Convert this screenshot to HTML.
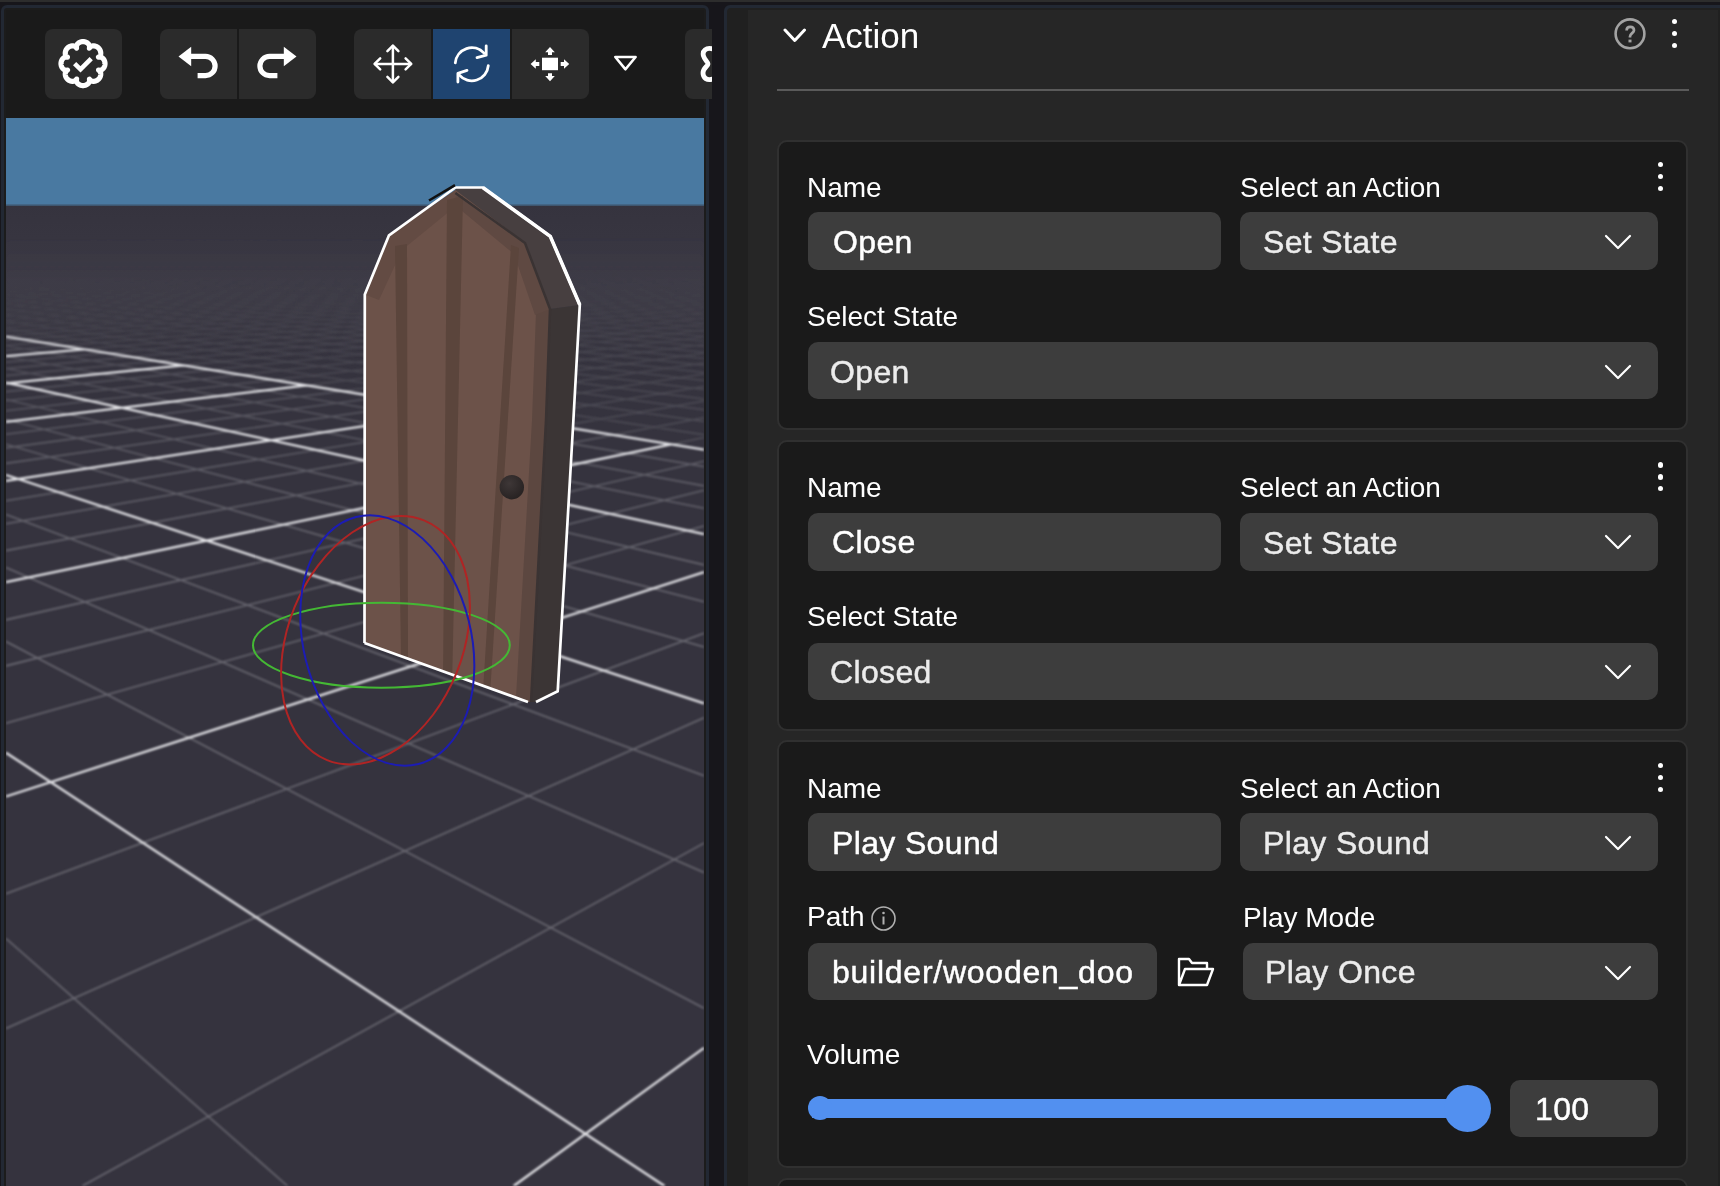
<!DOCTYPE html>
<html><head><meta charset="utf-8"><style>
html,body{margin:0;padding:0;width:1720px;height:1186px;overflow:hidden;background:#17161b;font-family:"Liberation Sans",sans-serif;}
.r{position:absolute;}
.t{position:absolute;line-height:1;white-space:nowrap;will-change:transform;}
.v{-webkit-text-stroke:0.45px currentColor;}
#left{position:absolute;left:0;top:0;width:712px;height:1186px;overflow:hidden;}
</style></head><body>
<div class="r" style="left:0;top:0;width:1720px;height:2px;background:#2d2d2d"></div>
<div id="left">
<div class="r" style="left:1px;top:5px;width:708px;height:1295px;background:#222833;border-radius:6px;"></div>
<div class="r" style="left:4px;top:8px;width:702px;height:1292px;background:#1c1c1c;border-radius:3px;"></div>
<div class="r" style="left:6px;top:10px;width:698px;height:108px;background:#1a1a1a;border-radius:0px;"></div>
<svg class="r" style="left:0;top:0" width="712" height="1186" viewBox="0 0 712 1186">
<defs><clipPath id="vc"><rect x="6" y="118" width="698" height="1068"/></clipPath><linearGradient id="fade" x1="0" y1="0" x2="0" y2="1"><stop offset="0" stop-color="#35333e" stop-opacity="1"/><stop offset="0.25" stop-color="#35333e" stop-opacity="0.85"/><stop offset="1" stop-color="#35333e" stop-opacity="0"/></linearGradient><linearGradient id="mg" gradientUnits="userSpaceOnUse" x1="0" y1="0" x2="0" y2="1186"><stop offset="0.2361" stop-color="#000000"/><stop offset="0.2698" stop-color="#3c3c3c"/><stop offset="0.3035" stop-color="#6e6e6e"/><stop offset="0.3541" stop-color="#aaaaaa"/><stop offset="0.4384" stop-color="#e1e1e1"/><stop offset="0.5481" stop-color="#ffffff"/></linearGradient><linearGradient id="mg2" gradientUnits="userSpaceOnUse" x1="0" y1="0" x2="0" y2="1186"><stop offset="0.2530" stop-color="#000000"/><stop offset="0.2698" stop-color="#969696"/><stop offset="0.2867" stop-color="#e6e6e6"/><stop offset="0.3120" stop-color="#ffffff"/></linearGradient><linearGradient id="haze" gradientUnits="userSpaceOnUse" x1="0" y1="205" x2="0" y2="360"><stop offset="0" stop-color="#3e3c47" stop-opacity="0"/><stop offset="0.5" stop-color="#3b3944" stop-opacity="0.6"/><stop offset="1" stop-color="#3e3c47" stop-opacity="0"/></linearGradient><linearGradient id="mg3" gradientUnits="userSpaceOnUse" x1="0" y1="0" x2="0" y2="1186"><stop offset="0.1939" stop-color="#000000"/><stop offset="0.2277" stop-color="#1c1c1c"/><stop offset="0.2614" stop-color="#505050"/><stop offset="0.3120" stop-color="#969696"/><stop offset="0.3879" stop-color="#d2d2d2"/><stop offset="0.5059" stop-color="#ffffff"/></linearGradient><mask id="gm3" maskUnits="userSpaceOnUse" x="0" y="0" width="712" height="1186"><rect x="0" y="0" width="712" height="1186" fill="url(#mg3)"/></mask><mask id="gm" maskUnits="userSpaceOnUse" x="0" y="0" width="712" height="1186"><rect x="0" y="0" width="712" height="1186" fill="url(#mg)"/></mask><mask id="gm2" maskUnits="userSpaceOnUse" x="0" y="0" width="712" height="1186"><rect x="0" y="0" width="712" height="1186" fill="url(#mg2)"/></mask><filter id="gb" x="0" y="0" width="712" height="1186" filterUnits="userSpaceOnUse"><feGaussianBlur stdDeviation="0.85"/></filter><radialGradient id="knob" cx="0.4" cy="0.35" r="0.7"><stop offset="0" stop-color="#3e3737"/><stop offset="1" stop-color="#262121"/></radialGradient></defs>
<g clip-path="url(#vc)">
<rect x="6" y="118" width="698" height="88" fill="#4979a1"/>
<rect x="6" y="205.5" width="698" height="981" fill="#35333e"/>
<rect x="6" y="204.3" width="698" height="1.4" fill="#3f5770" opacity="0.8"/>
<rect x="6" y="205" width="698" height="160" fill="url(#haze)"/>
<g filter="url(#gb)">
<path mask="url(#gm3)" d="M696.4 238.5L704.0 238.7M680.5 238.6L704.0 239.2M664.5 238.6L704.0 239.6M23.1 240.3L6.0 240.7M648.6 238.7L704.0 240.1M41.5 240.3L6.0 241.2M632.6 238.7L704.0 240.6M59.8 240.2L6.0 241.6M616.7 238.8L704.0 241.1M78.2 240.2L6.0 242.0M600.8 238.8L704.0 241.5M96.6 240.1L6.0 242.5M584.8 238.8L704.0 242.1M115.0 240.1L6.0 242.9M568.9 238.9L704.0 242.6M133.3 240.0L6.0 243.4M553.0 238.9L704.0 243.1M151.7 240.0L6.0 243.9M537.0 239.0L704.0 243.6M170.1 239.9L6.0 244.4M521.1 239.0L704.0 244.2M188.5 239.9L6.0 244.9M505.2 239.0L704.0 244.8M206.8 239.8L6.0 245.4M489.2 239.1L704.0 245.3M225.2 239.8L6.0 245.9M473.3 239.1L704.0 245.9M243.6 239.7L6.0 246.4M457.3 239.2L704.0 246.5M262.0 239.7L6.0 247.0M441.4 239.2L704.0 247.2M280.3 239.6L6.0 247.5M425.5 239.3L704.0 247.8M298.7 239.6L6.0 248.1M409.5 239.3L704.0 248.5M317.1 239.5L6.0 248.7M393.6 239.3L704.0 249.1M335.5 239.5L6.0 249.3M377.7 239.4L704.0 249.8M353.8 239.4L6.0 249.9M361.7 239.4L704.0 250.5M372.2 239.4L6.0 250.5M345.8 239.5L704.0 251.3M390.6 239.3L6.0 251.2M329.9 239.5L704.0 252.0M409.0 239.3L6.0 251.8M313.9 239.5L704.0 252.8M427.3 239.2L6.0 252.5M298.0 239.6L704.0 253.6M445.7 239.2L6.0 253.2M282.1 239.6L704.0 254.4M464.1 239.2L6.0 253.9M266.1 239.7L704.0 255.2M482.5 239.1L6.0 254.6M250.2 239.7L704.0 256.1M500.9 239.1L6.0 255.4M234.2 239.8L704.0 257.0M519.2 239.0L6.0 256.1M218.3 239.8L704.0 257.9M537.6 239.0L6.0 256.9M202.4 239.8L704.0 258.8M556.0 238.9L6.0 257.7M186.4 239.9L704.0 259.8M574.4 238.9L6.0 258.6M170.5 239.9L704.0 260.8M592.7 238.8L6.0 259.4M154.6 240.0L704.0 261.9M611.1 238.8L6.0 260.3M138.6 240.0L704.0 262.9M629.5 238.7L6.0 261.2M122.7 240.0L704.0 264.0M647.9 238.7L6.0 262.2M106.8 240.1L704.0 265.2M666.2 238.6L6.0 263.1M90.8 240.1L704.0 266.4M684.6 238.6L6.0 264.1M74.9 240.2L704.0 267.6M703.0 238.5L6.0 265.1M58.9 240.2L704.0 268.9M704.0 239.2L6.0 266.2M43.0 240.2L704.0 270.2M704.0 239.8L6.0 267.3M27.1 240.3L704.0 271.5M704.0 240.5L6.0 268.4M11.1 240.3L704.0 272.9M704.0 241.3L6.0 269.6M6.0 240.9L704.0 274.4M704.0 242.0L6.0 270.8M6.0 241.7L704.0 275.9M704.0 242.8L6.0 272.0M6.0 242.6L704.0 277.5M704.0 243.6L6.0 273.3M6.0 243.5L704.0 279.2M704.0 244.5L6.0 274.6M6.0 244.4L704.0 280.9M704.0 245.3L6.0 276.0M6.0 245.4L704.0 282.7M704.0 246.2L6.0 277.5M6.0 246.4L704.0 284.6M704.0 247.2L6.0 278.9M6.0 247.5L704.0 286.5M704.0 248.1L6.0 280.5M6.0 248.6L704.0 288.6M704.0 249.1L6.0 282.1M6.0 249.8L704.0 290.7M704.0 250.2L6.0 283.8M6.0 251.0L704.0 292.9M704.0 251.3L6.0 285.5M6.0 252.3L704.0 295.3M704.0 252.4L6.0 287.3M6.0 253.6L704.0 297.8M704.0 253.6L6.0 289.2M6.0 255.1L704.0 300.4M704.0 254.8L6.0 291.2M6.0 256.6L704.0 303.1M704.0 256.1L6.0 293.2M6.0 258.1L704.0 306.0M704.0 257.5L6.0 295.4M6.0 259.8L704.0 309.0M704.0 258.9L6.0 297.6M6.0 261.5L704.0 312.2M704.0 260.4L6.0 300.0M6.0 263.4L704.0 315.6M704.0 261.9L6.0 302.4M6.0 265.4L704.0 319.2M704.0 263.5L6.0 305.0M6.0 267.5L704.0 323.1M704.0 265.2L6.0 307.7M6.0 269.7L704.0 327.2M704.0 267.0L6.0 310.6M6.0 272.1L704.0 331.5M704.0 268.9L6.0 313.6M6.0 274.6L704.0 336.2M704.0 270.9L6.0 316.8M6.0 277.3L704.0 341.2M704.0 273.1L6.0 320.2M6.0 280.3L704.0 346.5M704.0 275.3L6.0 323.8M6.0 283.4L704.0 352.3M704.0 277.7L6.0 327.5M6.0 286.8L704.0 358.5M704.0 280.2L6.0 331.5M6.0 290.5L704.0 365.3M704.0 282.9L6.0 335.8M6.0 294.5L704.0 372.6M704.0 285.7L21.8 339.1M6.0 298.9L704.0 380.6M704.0 288.8L41.7 342.4M6.0 303.7L704.0 389.4M704.0 292.1L62.5 345.7M6.0 308.9L704.0 399.0M704.0 295.6L84.3 349.3M6.0 314.7L704.0 409.7M704.0 299.4L107.2 353.0M6.0 321.2L704.0 421.5M704.0 303.5L131.4 356.9M6.0 328.4L704.0 434.8M704.0 307.9L156.7 361.0M704.0 312.7L183.5 365.3M704.0 317.9L211.7 369.9M704.0 323.7L241.5 374.7M704.0 330.0L273.1 379.9M704.0 336.9L306.6 385.3M704.0 344.6L342.2 391.1M704.0 353.3L380.1 397.2M704.0 363.0L420.5 403.8M704.0 374.0L463.7 410.8M704.0 386.5L510.0 418.3M704.0 400.9L559.7 426.3M704.0 417.7L613.3 435.0M704.0 437.5L671.1 444.4" stroke="#57565f" stroke-width="1.5" fill="none"/>
<path mask="url(#gm)" d="M21.8 339.1L6.0 340.4M41.7 342.4L6.0 345.2M62.5 345.7L6.0 350.5M107.2 353.0L6.0 362.1M131.4 356.9L6.0 368.6M156.7 361.0L6.0 375.6M6.0 345.8L704.0 466.6M211.7 369.9L6.0 391.6M6.0 356.3L704.0 485.9M241.5 374.7L6.0 400.8M6.0 368.5L704.0 508.2M273.1 379.9L6.0 410.8M6.0 399.5L704.0 564.9M342.2 391.1L6.0 434.2M6.0 419.6L704.0 601.8M380.1 397.2L6.0 447.9M6.0 444.2L704.0 646.9M420.5 403.8L6.0 463.4M6.0 514.6L704.0 775.8M510.0 418.3L6.0 500.8M6.0 567.5L704.0 872.6M559.7 426.3L6.0 523.8M6.0 641.5L704.0 1008.2M613.3 435.0L6.0 550.6M6.0 938.5L287.5 1186.0M704.0 461.3L6.0 619.9M704.0 490.2L6.0 665.9M704.0 526.1L6.0 723.2M704.0 633.2L6.0 893.7M704.0 717.8L6.0 1028.5M704.0 843.1L82.3 1186.0" stroke="#6a6972" stroke-width="1.6" fill="none"/>
<path mask="url(#gm2)" d="M84.3 349.3L6.0 356.1M6.0 336.6L704.0 449.7M183.5 365.3L6.0 383.3M6.0 382.7L704.0 534.2M306.6 385.3L6.0 421.9M6.0 475.0L704.0 703.3M463.7 410.8L6.0 480.9M6.0 752.7L664.6 1186.0M671.1 444.4L6.0 582.1M704.0 572.2L6.0 796.5M704.0 1047.9L513.6 1186.0" stroke="#e2e2e6" stroke-width="2.3" fill="none"/>
</g>
<polygon points="455.4,188 482.8,187.5 550.3,236.4 579.8,304.9 550.3,309 525,242.7 455.4,193" fill="#473f40"/>
<polygon points="579.8,304.9 573.4,420 557.7,691.3 536,702 531,702 546,420 550.3,309" fill="#3b3535"/>
<clipPath id="ff"><polygon points="455.4,190 389,235.3 364.8,294.4 364.5,643 528,702 531,702 546,420 550.3,309 525,242.7"/></clipPath>
<polygon points="455.4,190 389,235.3 364.8,294.4 364.5,643 528,702 531,702 546,420 550.3,309 525,242.7" fill="#6c5249"/>
<g clip-path="url(#ff)">
<polygon points="525,242.7 550.3,309 546,420 531,702 516,697 532,420 536,312 518,252" fill="#5c4740"/>
<polygon points="389,235.3 455.4,190 456,206 402,250 379,300 364.8,294.4" fill="#634b43"/>
<polygon points="455.4,192 525,242.7 550.3,309 535,315 514,254 456,206" fill="#5f4942"/>
<polygon points="395,246 407,244 408,660 401,658" fill="#5b453c"/>
<polygon points="447,200 463,196 452,686 443,682" fill="#5b453c"/>
<polygon points="511,245 519,248 490,694 483,691" fill="#5b453c"/>
</g>
<polyline points="455.4,193 525,243 550,309 546,420 531,702" fill="none" stroke="#3a3333" stroke-width="2.5"/>
<circle cx="511.8" cy="487.2" r="12.2" fill="url(#knob)"/>
<polyline points="364.5,643 364.8,294.4 389,235.3 455.4,187.5 482.8,187.5 550.3,236.4 579.8,304.9 573.4,420 557.7,691.3 536,702" fill="none" stroke="#ffffff" stroke-width="2.7" stroke-linejoin="round"/>
<polyline points="364.5,643 528,702" fill="none" stroke="#ffffff" stroke-width="2.7"/>
<polyline points="482.8,187.5 550.3,236.4 579.8,304.9" fill="none" stroke="#fff" stroke-width="3.6" stroke-linejoin="round"/>
<path d="M429 200.5 L455 185.2" stroke="#111" stroke-width="2.6"/>
<ellipse cx="381.4" cy="645.2" rx="128.4" ry="42.5" fill="none" stroke="#44b834" stroke-width="2"/>
<ellipse cx="375.5" cy="640.2" rx="87.4" ry="129.3" transform="rotate(22 375.5 640.2)" fill="none" stroke="#b02424" stroke-width="2"/>
<ellipse cx="387.3" cy="640.5" rx="83.8" ry="127.4" transform="rotate(-14.2 387.3 640.5)" fill="none" stroke="#1c1cb4" stroke-width="2"/>
</g></svg>
<div class="r" style="left:45px;top:29px;width:77px;height:70px;background:#2b2b2b;border-radius:8px;"></div>
<div class="r" style="left:160px;top:29px;width:156px;height:70px;background:#2b2b2b;border-radius:8px;"></div>
<div class="r" style="left:237px;top:29px;width:2px;height:70px;background:#1a1a1a;border-radius:0px;"></div>
<div class="r" style="left:354px;top:29px;width:235px;height:70px;background:#2b2b2b;border-radius:8px;"></div>
<div class="r" style="left:433px;top:29px;width:77px;height:70px;background:#1f4470;border-radius:0px;"></div>
<div class="r" style="left:431px;top:29px;width:2px;height:70px;background:#1a1a1a;border-radius:0px;"></div>
<div class="r" style="left:510px;top:29px;width:2px;height:70px;background:#1a1a1a;border-radius:0px;"></div>
<div class="r" style="left:685px;top:29px;width:45px;height:70px;background:#2b2b2b;border-radius:8px;"></div>
<svg class="r" style="left:0;top:0" width="712" height="118"><polygon points="105.00,63.60 104.99,63.95 104.97,64.29 104.93,64.63 104.87,64.98 104.80,65.32 104.72,65.65 104.62,65.99 104.50,66.32 104.36,66.64 104.21,66.96 104.05,67.27 103.86,67.58 103.66,67.88 103.45,68.17 103.21,68.45 102.96,68.72 102.69,68.99 102.39,69.23 102.07,69.47 101.73,69.68 101.35,69.88 100.92,70.05 100.44,70.19 99.83,70.26 98.52,70.03 99.61,70.79 99.99,71.27 100.24,71.71 100.42,72.13 100.54,72.54 100.64,72.94 100.70,73.33 100.73,73.71 100.74,74.09 100.72,74.46 100.69,74.83 100.64,75.19 100.57,75.54 100.48,75.88 100.38,76.22 100.26,76.56 100.12,76.88 99.97,77.20 99.81,77.50 99.63,77.80 99.44,78.09 99.24,78.38 99.02,78.65 98.80,78.91 98.56,79.16 98.31,79.40 98.05,79.62 97.78,79.84 97.49,80.04 97.20,80.23 96.90,80.41 96.60,80.57 96.28,80.72 95.96,80.86 95.62,80.98 95.28,81.08 94.94,81.17 94.59,81.24 94.23,81.29 93.86,81.32 93.49,81.34 93.11,81.33 92.73,81.30 92.34,81.24 91.94,81.14 91.53,81.02 91.11,80.84 90.67,80.59 90.19,80.21 89.43,79.12 89.66,80.43 89.59,81.04 89.45,81.52 89.28,81.95 89.08,82.33 88.87,82.67 88.63,82.99 88.39,83.29 88.12,83.56 87.85,83.81 87.57,84.05 87.28,84.26 86.98,84.46 86.67,84.65 86.36,84.81 86.04,84.96 85.72,85.10 85.39,85.22 85.05,85.32 84.72,85.40 84.38,85.47 84.03,85.53 83.69,85.57 83.35,85.59 83.00,85.60 82.65,85.59 82.31,85.57 81.97,85.53 81.62,85.47 81.28,85.40 80.95,85.32 80.61,85.22 80.28,85.10 79.96,84.96 79.64,84.81 79.33,84.65 79.02,84.46 78.72,84.26 78.43,84.05 78.15,83.81 77.88,83.56 77.61,83.29 77.37,82.99 77.13,82.67 76.92,82.33 76.72,81.95 76.55,81.52 76.41,81.04 76.34,80.43 76.57,79.12 75.81,80.21 75.33,80.59 74.89,80.84 74.47,81.02 74.06,81.14 73.66,81.24 73.27,81.30 72.89,81.33 72.51,81.34 72.14,81.32 71.77,81.29 71.41,81.24 71.06,81.17 70.72,81.08 70.38,80.98 70.04,80.86 69.72,80.72 69.40,80.57 69.10,80.41 68.80,80.23 68.51,80.04 68.22,79.84 67.95,79.62 67.69,79.40 67.44,79.16 67.20,78.91 66.98,78.65 66.76,78.38 66.56,78.09 66.37,77.80 66.19,77.50 66.03,77.20 65.88,76.88 65.74,76.56 65.62,76.22 65.52,75.88 65.43,75.54 65.36,75.19 65.31,74.83 65.28,74.46 65.26,74.09 65.27,73.71 65.30,73.33 65.36,72.94 65.46,72.54 65.58,72.13 65.76,71.71 66.01,71.27 66.39,70.79 67.48,70.03 66.17,70.26 65.56,70.19 65.08,70.05 64.65,69.88 64.27,69.68 63.93,69.47 63.61,69.23 63.31,68.99 63.04,68.72 62.79,68.45 62.55,68.17 62.34,67.88 62.14,67.58 61.95,67.27 61.79,66.96 61.64,66.64 61.50,66.32 61.38,65.99 61.28,65.65 61.20,65.32 61.13,64.98 61.07,64.63 61.03,64.29 61.01,63.95 61.00,63.60 61.01,63.25 61.03,62.91 61.07,62.57 61.13,62.22 61.20,61.88 61.28,61.55 61.38,61.21 61.50,60.88 61.64,60.56 61.79,60.24 61.95,59.93 62.14,59.62 62.34,59.32 62.55,59.03 62.79,58.75 63.04,58.48 63.31,58.21 63.61,57.97 63.93,57.73 64.27,57.52 64.65,57.32 65.08,57.15 65.56,57.01 66.17,56.94 67.48,57.17 66.39,56.41 66.01,55.93 65.76,55.49 65.58,55.07 65.46,54.66 65.36,54.26 65.30,53.87 65.27,53.49 65.26,53.11 65.28,52.74 65.31,52.37 65.36,52.01 65.43,51.66 65.52,51.32 65.62,50.98 65.74,50.64 65.88,50.32 66.03,50.00 66.19,49.70 66.37,49.40 66.56,49.11 66.76,48.82 66.98,48.55 67.20,48.29 67.44,48.04 67.69,47.80 67.95,47.58 68.22,47.36 68.51,47.16 68.80,46.97 69.10,46.79 69.40,46.63 69.72,46.48 70.04,46.34 70.38,46.22 70.72,46.12 71.06,46.03 71.41,45.96 71.77,45.91 72.14,45.88 72.51,45.86 72.89,45.87 73.27,45.90 73.66,45.96 74.06,46.06 74.47,46.18 74.89,46.36 75.33,46.61 75.81,46.99 76.57,48.08 76.34,46.77 76.41,46.16 76.55,45.68 76.72,45.25 76.92,44.87 77.13,44.53 77.37,44.21 77.61,43.91 77.88,43.64 78.15,43.39 78.43,43.15 78.72,42.94 79.02,42.74 79.33,42.55 79.64,42.39 79.96,42.24 80.28,42.10 80.61,41.98 80.95,41.88 81.28,41.80 81.62,41.73 81.97,41.67 82.31,41.63 82.65,41.61 83.00,41.60 83.35,41.61 83.69,41.63 84.03,41.67 84.38,41.73 84.72,41.80 85.05,41.88 85.39,41.98 85.72,42.10 86.04,42.24 86.36,42.39 86.67,42.55 86.98,42.74 87.28,42.94 87.57,43.15 87.85,43.39 88.12,43.64 88.39,43.91 88.63,44.21 88.87,44.53 89.08,44.87 89.28,45.25 89.45,45.68 89.59,46.16 89.66,46.77 89.43,48.08 90.19,46.99 90.67,46.61 91.11,46.36 91.53,46.18 91.94,46.06 92.34,45.96 92.73,45.90 93.11,45.87 93.49,45.86 93.86,45.88 94.23,45.91 94.59,45.96 94.94,46.03 95.28,46.12 95.62,46.22 95.96,46.34 96.28,46.48 96.60,46.63 96.90,46.79 97.20,46.97 97.49,47.16 97.78,47.36 98.05,47.58 98.31,47.80 98.56,48.04 98.80,48.29 99.02,48.55 99.24,48.82 99.44,49.11 99.63,49.40 99.81,49.70 99.97,50.00 100.12,50.32 100.26,50.64 100.38,50.98 100.48,51.32 100.57,51.66 100.64,52.01 100.69,52.37 100.72,52.74 100.74,53.11 100.73,53.49 100.70,53.87 100.64,54.26 100.54,54.66 100.42,55.07 100.24,55.49 99.99,55.93 99.61,56.41 98.52,57.17 99.83,56.94 100.44,57.01 100.92,57.15 101.35,57.32 101.73,57.52 102.07,57.73 102.39,57.97 102.69,58.21 102.96,58.48 103.21,58.75 103.45,59.03 103.66,59.32 103.86,59.62 104.05,59.93 104.21,60.24 104.36,60.56 104.50,60.88 104.62,61.21 104.72,61.55 104.80,61.88 104.87,62.22 104.93,62.57 104.97,62.91 104.99,63.25 105.00,63.60" fill="none" stroke="#fff" stroke-width="5.2" stroke-linejoin="round"/><polyline points="74.6,63.6 80.5,69.3 91.2,58.6" fill="none" stroke="#fff" stroke-width="4.6"/><g><polygon points="178.5,56.4 191.2,46.8 191.2,66.2" fill="#fff"/><path d="M190 56.4 H205.5 A9.6 9.6 0 0 1 205.5 75.6 H197.6" fill="none" stroke="#fff" stroke-width="5.2"/></g><g transform="translate(475 0) scale(-1 1)"><polygon points="178.5,56.4 191.2,46.8 191.2,66.2" fill="#fff"/><path d="M190 56.4 H205.5 A9.6 9.6 0 0 1 205.5 75.6 H197.6" fill="none" stroke="#fff" stroke-width="5.2"/></g><g fill="none" stroke="#fff" stroke-width="2.5" stroke-linecap="round" stroke-linejoin="round"><path d="M375 63.9 H411 M392.9 46 V82"/><path d="M387.4 51.2 L392.9 45.6 L398.4 51.2"/><path d="M387.4 76.9 L392.9 82.4 L398.4 76.9"/><path d="M380.2 58.4 L374.6 63.9 L380.2 69.4"/><path d="M405.6 58.4 L411.2 63.9 L405.6 69.4"/></g><g fill="none" stroke="#fff" stroke-width="2.8" stroke-linecap="round" stroke-linejoin="round"><path d="M455.3 62.8 A16.6 16.6 0 0 1 484.1 53.1"/><path d="M488.3 65.6 A16.6 16.6 0 0 1 459.1 74.9"/><path d="M486.2 45.8 V55.2 L477 57.6"/><path d="M457.9 82 V73.4 L467 70.4"/></g><g fill="#fff"><rect x="542" y="57.7" width="16" height="12.5"/><polygon points="550,47 554.8,52.3 552,52.3 552,55 548,55 548,52.3 545.2,52.3"/><polygon points="550,81.2 554.8,75.9 552,75.9 552,73.2 548,73.2 548,75.9 545.2,75.9"/><polygon points="530.6,64 535.8,59.3 535.8,62 539.3,62 539.3,66 535.8,66 535.8,68.7"/><polygon points="569.2,64 564,59.3 564,62 560.7,62 560.7,66 564,66 564,68.7"/></g><polygon points="615.3,57 635.6,57 625.5,69.3" fill="none" stroke="#fff" stroke-width="2.6" stroke-linejoin="round"/><path d="M713 49 C706 47 702 51 703.5 56 C704.5 60 708 62 708 64 C708 66 703 68 703 73 C703 78 707 81 713 79" fill="none" stroke="#fff" stroke-width="4.8" stroke-linecap="round"/></svg>
</div>
<div class="r" style="left:724px;top:5px;width:1036px;height:1295px;background:#222833;border-radius:6px;"></div>
<div class="r" style="left:727px;top:8px;width:1033px;height:1292px;background:#202020;border-radius:4px;"></div>
<div class="r" style="left:748px;top:10px;width:970px;height:1290px;background:#262626;border-radius:0px;"></div>
<svg class="r" style="left:783px;top:28px" width="23.5" height="14.5"><polyline points="2,2 11.75,12.5 21.5,2" fill="none" stroke="#fff" stroke-width="3" stroke-linecap="round" stroke-linejoin="round"/></svg>
<div class="t " style="left:821.5px;top:17.8px;font-size:35px;color:#fff;">Action</div>
<svg class="r" style="left:1612px;top:16px" width="36" height="36"><circle cx="18" cy="17.8" r="14.4" fill="none" stroke="#a3a3a3" stroke-width="2.6"/><path d="M14.6 14.6 C14.6 12 16.2 10.9 18.2 10.9 C20.4 10.9 22 12.3 22 14.3 C22 17 18 17.4 18 20.6 V21.6" fill="none" stroke="#a3a3a3" stroke-width="2.7"/><rect x="16.5" y="23.6" width="3" height="2.8" fill="#a3a3a3"/></svg>
<div class="r" style="left:1671.9px;top:18.6px;width:5.4px;height:5.4px;border-radius:50%;background:#fff"></div><div class="r" style="left:1671.9px;top:30.7px;width:5.4px;height:5.4px;border-radius:50%;background:#fff"></div><div class="r" style="left:1671.9px;top:42.6px;width:5.4px;height:5.4px;border-radius:50%;background:#fff"></div>
<div class="r" style="left:777px;top:89px;width:912px;height:2px;background:#5a5a5a;border-radius:0px;"></div>
<div class="r" style="left:777px;top:140px;width:911px;height:290px;background:#1a1a1a;border-radius:10px;box-sizing:border-box;border:2px solid #303030;"></div>
<div class="t " style="left:807.1px;top:173.5px;font-size:28px;color:#fff;">Name</div><div class="t " style="left:1240.3px;top:173.5px;font-size:28px;color:#fff;">Select an Action</div><div class="r" style="left:1657.8px;top:161.8px;width:5.4px;height:5.4px;border-radius:50%;background:#fff"></div><div class="r" style="left:1657.8px;top:173.6px;width:5.4px;height:5.4px;border-radius:50%;background:#fff"></div><div class="r" style="left:1657.8px;top:185.5px;width:5.4px;height:5.4px;border-radius:50%;background:#fff"></div><div class="r" style="left:808px;top:212px;width:413px;height:58px;background:#3d3d3d;border-radius:10px;"></div><div class="r" style="left:1240px;top:212px;width:418px;height:58px;background:#3d3d3d;border-radius:10px;"></div><svg class="r" style="left:1604px;top:233.7px" width="28" height="16"><polyline points="2,2 14.0,14 26,2" fill="none" stroke="#fff" stroke-width="2.2" stroke-linecap="round" stroke-linejoin="round"/></svg>
<div class="t v" style="left:832.6px;top:225.7px;font-size:32px;color:#fff;letter-spacing:0.35px;">Open</div>
<div class="t v" style="left:1263.0px;top:225.9px;font-size:32px;color:#ececec;letter-spacing:0.35px;">Set State</div>
<div class="t " style="left:807.1px;top:302.5px;font-size:28px;color:#fff;">Select State</div>
<div class="r" style="left:808px;top:342px;width:850px;height:57px;background:#3d3d3d;border-radius:10px;"></div>
<svg class="r" style="left:1604px;top:363.7px" width="28" height="16"><polyline points="2,2 14.0,14 26,2" fill="none" stroke="#fff" stroke-width="2.2" stroke-linecap="round" stroke-linejoin="round"/></svg>
<div class="t v" style="left:829.8px;top:355.5px;font-size:32px;color:#ececec;letter-spacing:0.35px;">Open</div>
<div class="r" style="left:777px;top:440px;width:911px;height:291px;background:#1a1a1a;border-radius:10px;box-sizing:border-box;border:2px solid #303030;"></div>
<div class="t " style="left:807.1px;top:474.1px;font-size:28px;color:#fff;">Name</div><div class="t " style="left:1240.3px;top:474.1px;font-size:28px;color:#fff;">Select an Action</div><div class="r" style="left:1657.8px;top:462.4px;width:5.4px;height:5.4px;border-radius:50%;background:#fff"></div><div class="r" style="left:1657.8px;top:474.2px;width:5.4px;height:5.4px;border-radius:50%;background:#fff"></div><div class="r" style="left:1657.8px;top:486.1px;width:5.4px;height:5.4px;border-radius:50%;background:#fff"></div><div class="r" style="left:808px;top:512.6px;width:413px;height:58.0px;background:#3d3d3d;border-radius:10px;"></div><div class="r" style="left:1240px;top:512.6px;width:418px;height:58.0px;background:#3d3d3d;border-radius:10px;"></div><svg class="r" style="left:1604px;top:534.3px" width="28" height="16"><polyline points="2,2 14.0,14 26,2" fill="none" stroke="#fff" stroke-width="2.2" stroke-linecap="round" stroke-linejoin="round"/></svg>
<div class="t v" style="left:832.3px;top:526.3px;font-size:32px;color:#fff;letter-spacing:0.35px;">Close</div>
<div class="t v" style="left:1263.0px;top:526.5px;font-size:32px;color:#ececec;letter-spacing:0.35px;">Set State</div>
<div class="t " style="left:807.1px;top:603.1px;font-size:28px;color:#fff;">Select State</div>
<div class="r" style="left:808px;top:642.6px;width:850px;height:57.0px;background:#3d3d3d;border-radius:10px;"></div>
<svg class="r" style="left:1604px;top:664.3px" width="28" height="16"><polyline points="2,2 14.0,14 26,2" fill="none" stroke="#fff" stroke-width="2.2" stroke-linecap="round" stroke-linejoin="round"/></svg>
<div class="t v" style="left:830.3px;top:656.1px;font-size:32px;color:#ececec;letter-spacing:0.35px;">Closed</div>
<div class="r" style="left:777px;top:740px;width:911px;height:428px;background:#1a1a1a;border-radius:10px;box-sizing:border-box;border:2px solid #303030;"></div>
<div class="t " style="left:807.1px;top:774.5px;font-size:28px;color:#fff;">Name</div><div class="t " style="left:1240.3px;top:774.5px;font-size:28px;color:#fff;">Select an Action</div><div class="r" style="left:1657.8px;top:762.8px;width:5.4px;height:5.4px;border-radius:50%;background:#fff"></div><div class="r" style="left:1657.8px;top:774.6px;width:5.4px;height:5.4px;border-radius:50%;background:#fff"></div><div class="r" style="left:1657.8px;top:786.5px;width:5.4px;height:5.4px;border-radius:50%;background:#fff"></div><div class="r" style="left:808px;top:813px;width:413px;height:58px;background:#3d3d3d;border-radius:10px;"></div><div class="r" style="left:1240px;top:813px;width:418px;height:58px;background:#3d3d3d;border-radius:10px;"></div><svg class="r" style="left:1604px;top:834.7px" width="28" height="16"><polyline points="2,2 14.0,14 26,2" fill="none" stroke="#fff" stroke-width="2.2" stroke-linecap="round" stroke-linejoin="round"/></svg>
<div class="t v" style="left:832.2px;top:826.7px;font-size:32px;color:#fff;letter-spacing:0.35px;">Play Sound</div>
<div class="t v" style="left:1263.0px;top:826.9px;font-size:32px;color:#ececec;letter-spacing:0.35px;">Play Sound</div>
<div class="t " style="left:807.1px;top:903.1px;font-size:28px;color:#fff;">Path</div>
<svg class="r" style="left:870px;top:905px" width="27" height="27"><circle cx="13.5" cy="13.5" r="11.5" fill="none" stroke="#b0b0b0" stroke-width="1.6"/><rect x="12.5" y="11.5" width="2" height="8" fill="#b0b0b0"/><circle cx="13.5" cy="8" r="1.3" fill="#b0b0b0"/></svg>
<div class="t " style="left:1242.5px;top:903.6px;font-size:28px;color:#fff;">Play Mode</div>
<div class="r" style="left:808px;top:943px;width:349px;height:57px;background:#3d3d3d;border-radius:10px;"></div>
<div class="t v" style="left:832.2px;top:955.9px;font-size:32px;color:#fff;letter-spacing:0.75px;">builder/wooden_doo</div>
<svg class="r" style="left:1176px;top:955px" width="40" height="34"><path d="M3 30 V4 H13 L16 8 H31 V13 M3 30 L9 14 H37 L31 30 Z" fill="none" stroke="#fff" stroke-width="2.4" stroke-linejoin="round"/></svg>
<div class="r" style="left:1243px;top:943px;width:415px;height:57px;background:#3d3d3d;border-radius:10px;"></div>
<svg class="r" style="left:1604px;top:965px" width="28" height="16"><polyline points="2,2 14.0,14 26,2" fill="none" stroke="#fff" stroke-width="2.2" stroke-linecap="round" stroke-linejoin="round"/></svg>
<div class="t v" style="left:1264.6px;top:955.9px;font-size:32px;color:#ececec;letter-spacing:0.35px;">Play Once</div>
<div class="t " style="left:807.1px;top:1040.6px;font-size:28px;color:#fff;">Volume</div>
<div class="r" style="left:812px;top:1099px;width:655px;height:19px;background:#5290f0;border-radius:0px;"></div>
<div class="r" style="left:808px;top:1096px;width:24px;height:24px;border-radius:50%;background:#5290f0"></div>
<div class="r" style="left:1444px;top:1085px;width:47px;height:47px;border-radius:50%;background:#5290f0"></div>
<div class="r" style="left:1510px;top:1080px;width:148px;height:57px;background:#3d3d3d;border-radius:10px;"></div>
<div class="t v" style="left:1535.0px;top:1092.9px;font-size:32px;color:#fff;letter-spacing:0.35px;">100</div>
<div class="r" style="left:777px;top:1178px;width:911px;height:122px;background:#1a1a1a;border-radius:10px;box-sizing:border-box;border:2px solid #303030;"></div>
</body></html>
